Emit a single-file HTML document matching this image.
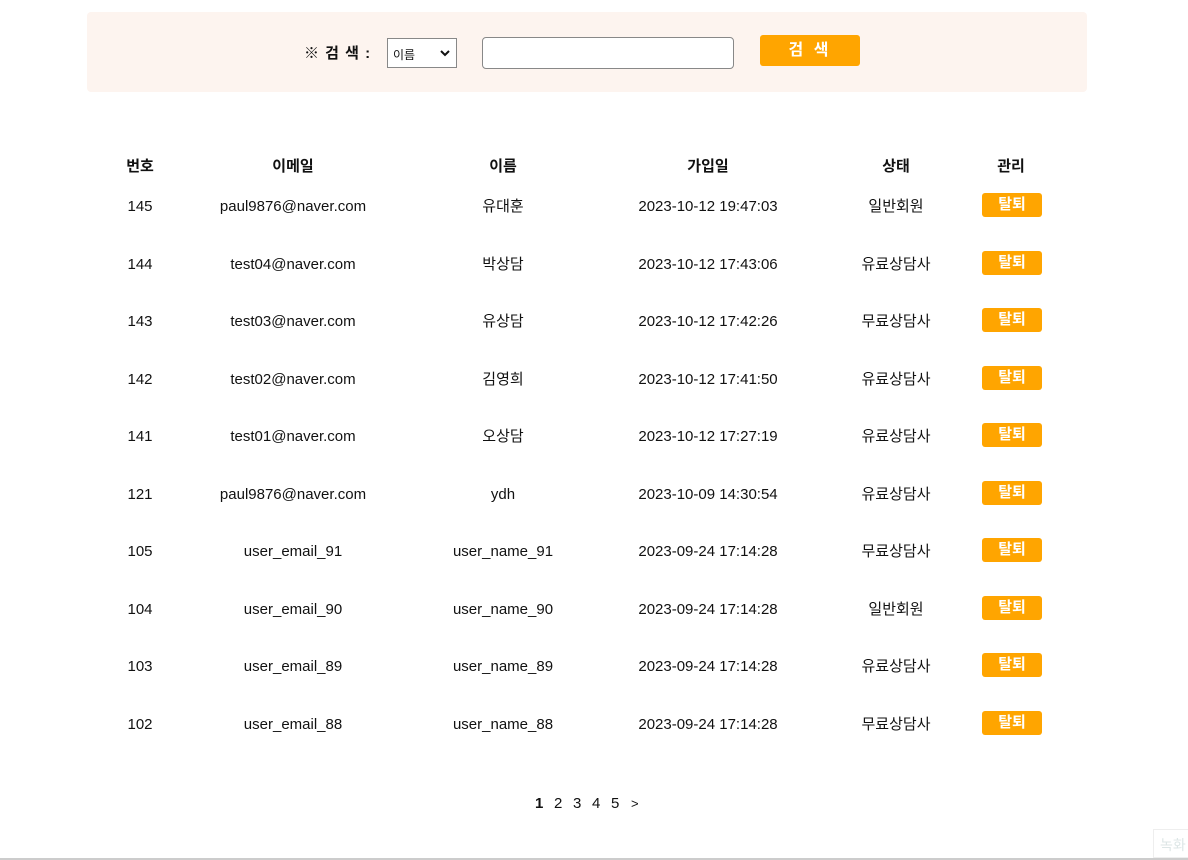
<!DOCTYPE html>
<html><head><meta charset="utf-8"><style>
*{margin:0;padding:0;box-sizing:border-box}
body{width:1188px;height:860px;background:#fff;position:relative;overflow:hidden;font-family:"Liberation Sans","Noto Sans CJK KR",sans-serif;color:#111;font-size:15px}
.sbox{position:absolute;left:87px;top:12px;width:1000px;height:80px;background:#fdf4ef;border-radius:4px}
.lbl{position:absolute;left:304px;top:42px;font-weight:bold;font-size:15px;letter-spacing:1px}
.sel{position:absolute;left:387px;top:38px;width:70px;height:30px;border:1px solid #888;background:#fff;font-size:12px;padding:7px 0 0 5px}
.sel svg{position:absolute;right:6px;top:11px}
.inp{position:absolute;left:482px;top:37px;width:252px;height:32px;border:1px solid #888;border-radius:4px;background:#fff}
.btn{position:absolute;left:760px;top:35px;width:100px;height:31px;background:#ffa500;border-radius:3px;color:#fff;font-weight:bold;font-size:16px;text-align:center;line-height:31px;letter-spacing:3px}
.c{position:absolute;transform:translate(-50%,2px);white-space:nowrap;line-height:20px}
.h{font-weight:bold}
.out{position:absolute;left:982px;width:60px;height:24px;background:#ffa500;border-radius:3px;color:#fff;font-weight:bold;font-size:15px;text-align:center;line-height:24px}
.pg{position:absolute;top:794px;font-size:15px;line-height:20px}
.bl{position:absolute;left:0;top:858px;width:1188px;height:2px;background:#ccc}
.rec{position:absolute;left:1153px;top:829px;width:40px;height:29px;border:1px solid #eee;color:#dde6e6;font-size:14px;padding:5px 0 0 6px}
</style></head><body>
<div class="sbox"></div>
<div class="lbl">※ 검 색 :</div>
<div class="sel">이름<svg width="10" height="7" viewBox="0 0 10 7"><path d="M1 1l4 4 4-4" stroke="#111" stroke-width="2" fill="none"/></svg></div>
<div class="inp"></div>
<div class="btn">검 색</div>

<div class="c h" style="left:140px;top:155px">번호</div>
<div class="c h" style="left:293px;top:155px">이메일</div>
<div class="c h" style="left:503px;top:155px">이름</div>
<div class="c h" style="left:708px;top:155px">가입일</div>
<div class="c h" style="left:896px;top:155px">상태</div>
<div class="c h" style="left:1011px;top:155px">관리</div>

<div class="c" style="left:140px;top:195px">145</div><div class="c" style="left:293px;top:195px">paul9876@naver.com</div><div class="c" style="left:503px;top:195px">유대훈</div><div class="c" style="left:708px;top:195px">2023-10-12 19:47:03</div><div class="c" style="left:896px;top:195px">일반회원</div><div class="out" style="top:193px">탈퇴</div>
<div class="c" style="left:140px;top:253px">144</div><div class="c" style="left:293px;top:253px">test04@naver.com</div><div class="c" style="left:503px;top:253px">박상담</div><div class="c" style="left:708px;top:253px">2023-10-12 17:43:06</div><div class="c" style="left:896px;top:253px">유료상담사</div><div class="out" style="top:251px">탈퇴</div>
<div class="c" style="left:140px;top:310px">143</div><div class="c" style="left:293px;top:310px">test03@naver.com</div><div class="c" style="left:503px;top:310px">유상담</div><div class="c" style="left:708px;top:310px">2023-10-12 17:42:26</div><div class="c" style="left:896px;top:310px">무료상담사</div><div class="out" style="top:308px">탈퇴</div>
<div class="c" style="left:140px;top:368px">142</div><div class="c" style="left:293px;top:368px">test02@naver.com</div><div class="c" style="left:503px;top:368px">김영희</div><div class="c" style="left:708px;top:368px">2023-10-12 17:41:50</div><div class="c" style="left:896px;top:368px">유료상담사</div><div class="out" style="top:366px">탈퇴</div>
<div class="c" style="left:140px;top:425px">141</div><div class="c" style="left:293px;top:425px">test01@naver.com</div><div class="c" style="left:503px;top:425px">오상담</div><div class="c" style="left:708px;top:425px">2023-10-12 17:27:19</div><div class="c" style="left:896px;top:425px">유료상담사</div><div class="out" style="top:423px">탈퇴</div>
<div class="c" style="left:140px;top:483px">121</div><div class="c" style="left:293px;top:483px">paul9876@naver.com</div><div class="c" style="left:503px;top:483px">ydh</div><div class="c" style="left:708px;top:483px">2023-10-09 14:30:54</div><div class="c" style="left:896px;top:483px">유료상담사</div><div class="out" style="top:481px">탈퇴</div>
<div class="c" style="left:140px;top:540px">105</div><div class="c" style="left:293px;top:540px">user_email_91</div><div class="c" style="left:503px;top:540px">user_name_91</div><div class="c" style="left:708px;top:540px">2023-09-24 17:14:28</div><div class="c" style="left:896px;top:540px">무료상담사</div><div class="out" style="top:538px">탈퇴</div>
<div class="c" style="left:140px;top:598px">104</div><div class="c" style="left:293px;top:598px">user_email_90</div><div class="c" style="left:503px;top:598px">user_name_90</div><div class="c" style="left:708px;top:598px">2023-09-24 17:14:28</div><div class="c" style="left:896px;top:598px">일반회원</div><div class="out" style="top:596px">탈퇴</div>
<div class="c" style="left:140px;top:655px">103</div><div class="c" style="left:293px;top:655px">user_email_89</div><div class="c" style="left:503px;top:655px">user_name_89</div><div class="c" style="left:708px;top:655px">2023-09-24 17:14:28</div><div class="c" style="left:896px;top:655px">유료상담사</div><div class="out" style="top:653px">탈퇴</div>
<div class="c" style="left:140px;top:713px">102</div><div class="c" style="left:293px;top:713px">user_email_88</div><div class="c" style="left:503px;top:713px">user_name_88</div><div class="c" style="left:708px;top:713px">2023-09-24 17:14:28</div><div class="c" style="left:896px;top:713px">무료상담사</div><div class="out" style="top:711px">탈퇴</div>

<div class="pg" style="left:535px;font-weight:bold">1</div>
<div class="pg" style="left:554px">2</div>
<div class="pg" style="left:573px">3</div>
<div class="pg" style="left:592px">4</div>
<div class="pg" style="left:611px">5</div>
<div class="pg" style="left:631px;font-size:13px">&gt;</div>

<div class="rec">녹화</div>
<div class="bl"></div>
</body></html>
